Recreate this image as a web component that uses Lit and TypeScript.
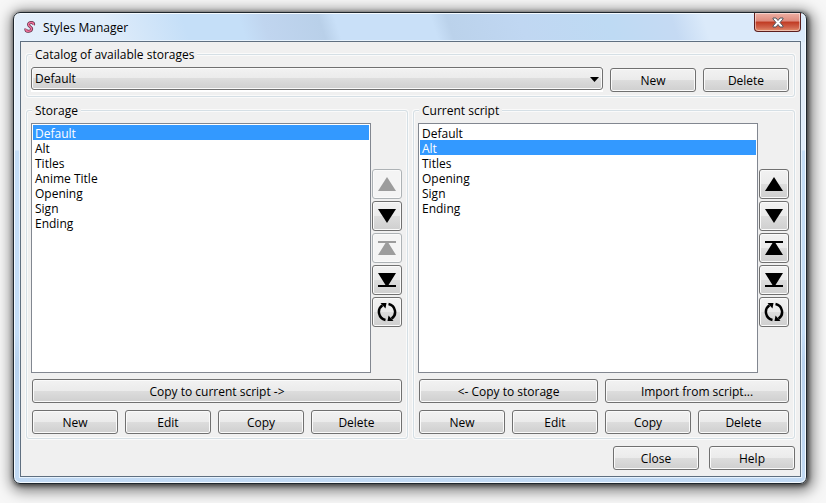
import { LitElement, html, css, svg } from "lit";
import { customElement, property, state } from "lit/decorators.js";

const ICONS: Record<string, unknown> = {
  up: svg`<path d="M1 17 10 3 19 17Z"/>`,
  down: svg`<path d="M1 3H19L10 17Z"/>`,
  top: svg`<path d="M1 3H19V5H11.500L19 17H1L8.500 5H1Z"/>`,
  bottom: svg`<path d="M1 3H19L11.500 15H19V17H1V15H8.500Z"/>`,
  sort: svg`<g fill="none" stroke="currentColor" stroke-width="2.500"><path d="M8.500 18A8.200 8.200 0 0 1 5.500 3.200"/><path d="M11.500 2A8.200 8.200 0 0 1 14.500 16.800"/></g><path d="M3.500 1H9.500L8.500 6.500Z"/><path d="M16.500 19H10.500L11.500 13.500Z"/>`,
};

const MOVES = [
  { icon: "up", label: "Move up" },
  { icon: "down", label: "Move down" },
  { icon: "top", label: "Move to top" },
  { icon: "bottom", label: "Move to bottom" },
  { icon: "sort", label: "Sort" },
];

const controls = css`
  * { box-sizing: border-box; }
  button, select, fieldset, legend { font: inherit; color: inherit; margin: 0; }
  .push {
    height: 24px;
    min-width: 0;
    padding: 0;
    border: 1px solid #707070;
    border-radius: 3px;
    background: linear-gradient(#f2f2f2 0%, #ebebeb 49%, #dddddd 50%, #cfcfcf 100%);
    box-shadow: inset 0 0 0 1px #fafafa;
  }
  .group {
    min-width: 0;
    padding: 5px 5px 4px 4px;
    border: 1px solid #d5dfe5;
    border-radius: 3px;
    box-shadow: inset 0 0 0 1px #fafafa, 0 0 0 1px #fafafa;
  }
  .group > legend {
    height: 15px;
    line-height: 15px;
    padding: 0 3px;
    margin-left: 1px;
    background: #f0f0f0;
  }
`;

@customElement("style-panel")
export class StylePanel extends LitElement {
  @property() heading = "";
  @property({ type: Array }) items: string[] = [];
  @property({ type: Array }) transfers: string[] = [];
  @property({ type: Number }) selected = 0;

  static styles = [controls, css`
    :host { display: block; min-width: 0; }
    .body { display: grid; grid-template-columns: 1fr 30px; gap: 1px; align-items: center; }
    .list {
      width: 100%;
      height: 250px;
      padding: 1px;
      border: 1px solid #828790;
      border-radius: 0;
      background: #fff;
      color: #000;
      overflow: hidden;
      outline: none;
    }
    .list option { min-height: 15px; height: 15px; line-height: 15px; padding: 0 2px; }
    .list option:checked {
      background: linear-gradient(#3399ff, #3399ff);
      -webkit-text-fill-color: #fff;
    }
    .moves { display: grid; gap: 2px; }
    .move { height: 30px; display: grid; place-items: center; }
    .move:disabled { border-color: #adb2b5; background: #f4f4f4; color: #9c9c9c; }
    .move svg { width: 20px; height: 20px; fill: currentColor; }
    .transfers, .actions { display: grid; gap: 7px; padding-left: 1px; }
    .transfers { margin-top: 6px; }
    .transfers.two { grid-template-columns: 179fr 184fr; }
    .actions { margin-top: 7px; grid-template-columns: 86fr 86fr 86fr 91fr; }
  `];

  private pick(e: Event) {
    this.selected = (e.target as HTMLSelectElement).selectedIndex;
  }

  render() {
    const first = this.selected === 0;
    return html`
      <fieldset class="group">
        <legend>${this.heading}</legend>
        <div class="body">
          <select class="list" size="16" aria-label=${this.heading} @change=${this.pick}>
            ${this.items.map((t, i) => html`<option ?selected=${i === this.selected}>${t}</option>`)}
          </select>
          <div class="moves">
            ${MOVES.map(m => html`
              <button class="push move" aria-label=${m.label} ?disabled=${first && (m.icon === "up" || m.icon === "top")}>
                <svg viewBox="0 0 20 20" aria-hidden="true">${ICONS[m.icon]}</svg>
              </button>`)}
          </div>
        </div>
        <div class="transfers ${this.transfers.length > 1 ? "two" : ""}">
          ${this.transfers.map(t => html`<button class="push">${t}</button>`)}
        </div>
        <div class="actions">
          ${["New", "Edit", "Copy", "Delete"].map(t => html`<button class="push">${t}</button>`)}
        </div>
      </fieldset>`;
  }
}

@customElement("app-root")
export class AppRoot extends LitElement {
  @state() private storage = ["Default", "Alt", "Titles", "Anime Title", "Opening", "Sign", "Ending"];
  @state() private script = ["Default", "Alt", "Titles", "Opening", "Sign", "Ending"];

  static styles = [controls, css`
    :host {
      display: block;
      min-height: 100vh;
      padding: 12px 19px 19px 13px;
      box-sizing: border-box;
      overflow: hidden;
      background: #f7f7f7;
      color: #000;
      font: 12px/15px "Open Sans", "Noto Sans", sans-serif;
    }
    .window {
      border: 1px solid #1f272e;
      border-radius: 7px;
      padding: 0 5px 6px 6px;
      background:
        linear-gradient(72deg, #e4effb 0%, #dfecfa 12%, #c5dff8 22%, #c5dff8 29%, #c0d5ef 32%, #b9d0e9 39%, #c9e0f8 41%, #c9e0f8 53%, #bbd2eb 55%, #c0d7f2 64%, #bedaf3 75%, #c5daf3 83%, #dbeafa 87%, #dbeafa 100%) top / 100% 29px no-repeat,
        linear-gradient(#e4effb 0, #dfecfa 137px, #c5def7 138px, #c5def7 320px, #b9d3ef 350px, #c2daf4 100%);
      box-shadow: inset 0 0 0 1px #f4faff, 1px 1px 4px 1px rgba(0,0,0,.55), 2px 3px 14px 4px rgba(0,0,0,.5);
    }
    .title { height: 28px; display: flex; align-items: center; gap: 7px; padding-left: 4px; }
    .title h1 { flex: 1; margin: 0; font: inherit; }
    .logo { width: 12px; height: 12px; }
    .close {
      align-self: flex-start;
      width: 47px;
      height: 19px;
      padding: 0;
      display: grid;
      place-items: center;
      border: 1px solid #5b1e1e;
      border-top: 0;
      border-radius: 0 0 4px 4px;
      background: linear-gradient(#eeb0a4 0%, #dd8a7c 45%, #c03a22 50%, #d0644c 80%, #e58f6c 100%);
      box-shadow: inset 0 0 0 1px rgba(255,255,255,.45);
    }
    .close svg { width: 12px; height: 11px; }
    .client { border: 1px solid #5f6f80; outline: 1px solid #e6f2fd; background: #f0f0f0; padding: 5px 5px 6px; }
    .catalog { display: grid; grid-template-columns: 1fr 86px 86px; column-gap: 7px; align-items: end; }
    .combo { position: relative; height: 25px; background: #fff; }
    .combo select { width: 100%; height: 23px; display: block; appearance: none; padding: 0 3px; }
    .combo svg { position: absolute; right: 4px; top: 10px; width: 9px; height: 5px; pointer-events: none; }
    .panels { display: grid; grid-template-columns: 1fr 1fr; gap: 5px; margin-top: 6px; }
    .footer { display: flex; justify-content: flex-end; gap: 10px; margin-top: 7px; }
    .footer .push { width: 86px; }
  `];

  render() {
    return html`
      <main class="window">
        <header class="title">
          <svg class="logo" viewBox="0 0 12 12" fill="none" aria-hidden="true">
            <path d="M9.500 4C10.500 .8 4.500 .8 4.500 3.500C4.500 6 8.500 6 7.500 8.500C6.500 11 1 11 2 7.800" stroke="#5c3046" stroke-width="3"/>
            <path d="M9.500 4C10.500 .8 4.500 .8 4.500 3.500C4.500 6 8.500 6 7.500 8.500C6.500 11 1 11 2 7.800" stroke="#f0709a" stroke-width="1.600"/>
          </svg>
          <h1>Styles Manager</h1>
          <button class="close" aria-label="Close window">
            <svg viewBox="0 0 12 11" aria-hidden="true"><path d="M1 1H4L6 3.500 8 1H11V2L8 5.500 11 9V10H8L6 7.500 4 10H1V9L4 5.500 1 2Z" fill="#fff" stroke="#53575f"/></svg>
          </button>
        </header>
        <div class="client">
          <fieldset class="group">
            <legend>Catalog of available storages</legend>
            <div class="catalog">
              <div class="combo">
                <select class="push" aria-label="Catalog of available storages"><option>Default</option></select>
                <svg viewBox="0 0 9 5" aria-hidden="true"><path d="M0 0H9L4.500 5Z"/></svg>
              </div>
              <button class="push">New</button>
              <button class="push">Delete</button>
            </div>
          </fieldset>
          <div class="panels">
            <style-panel heading="Storage" .items=${this.storage} .selected=${0} .transfers=${["Copy to current script ->"]}></style-panel>
            <style-panel heading="Current script" .items=${this.script} .selected=${1} .transfers=${["<- Copy to storage", "Import from script..."]}></style-panel>
          </div>
          <div class="footer">
            <button class="push">Close</button>
            <button class="push">Help</button>
          </div>
        </div>
      </main>`;
  }
}
